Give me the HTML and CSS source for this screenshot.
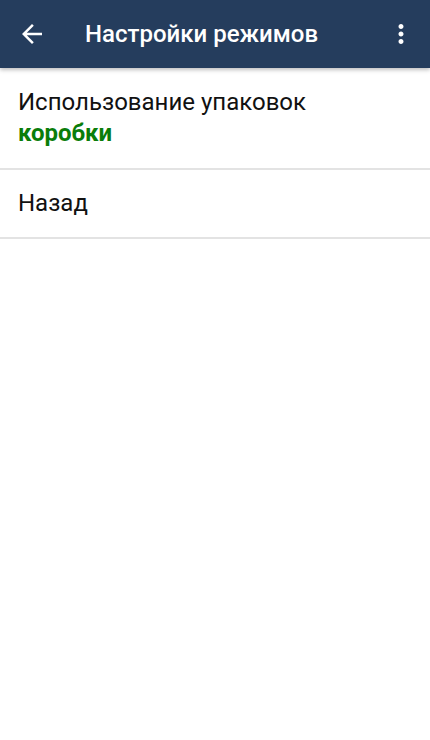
FILE: index.html
```html
<!DOCTYPE html>
<html lang="ru">
<head>
    <meta charset="UTF-8">
    <title>Настройки режимов</title>
    <link rel="stylesheet" href="styles.css">
</head>
<body>
    <div class="toolbar">
        <div class="toolbar-btn">
            <svg width="30" height="30" viewBox="0 0 24 24"><path fill="#fff" d="M20 11H7.83l5.59-5.59L12 4l-8 8 8 8 1.41-1.41L7.83 13H20v-2z"/></svg>
        </div>
        <div class="toolbar-title">Настройки режимов</div>
        <div class="toolbar-btn menu-btn">
            <svg width="30" height="30" viewBox="0 0 24 24"><path fill="#fff" d="M12 8c1.1 0 2-.9 2-2s-.9-2-2-2-2 .9-2 2 .9 2 2 2zm0 2c-1.1 0-2 .9-2 2s.9 2 2 2 2-.9 2-2-.9-2-2-2zm0 6c-1.1 0-2 .9-2 2s.9 2 2 2 2-.9 2-2-.9-2-2-2z"/></svg>
        </div>
    </div>
    <div class="list">
        <div class="list-item item-tall">
            <div class="item-title">Использование упаковок</div>
            <div class="item-value">коробки</div>
        </div>
        <div class="list-item">
            <div class="item-title">Назад</div>
        </div>
    </div>
</body>
</html>
```

FILE: styles.css
```css
body {
    margin: 0;
    font-family: Roboto, "Noto Sans", sans-serif;
    background-color: #fff;
}
.toolbar {
    height: 68px;
    background-color: #253d5d;
    display: flex;
    align-items: center;
    box-shadow: 0 2px 4px rgba(0, 0, 0, 0.25);
    position: relative;
}
.toolbar-btn {
    width: 30px;
    height: 30px;
    margin-left: 17px;
    display: flex;
}
.menu-btn {
    margin-left: 0;
    margin-right: 14px;
}
.toolbar-title {
    flex: 1;
    color: #fff;
    font-size: 24px;
    font-weight: 500;
    margin-left: 38px;
}
.list-item {
    height: 69px;
    padding: 18px 18px 0 18px;
    border-bottom: 2px solid #e3e3e3;
    box-sizing: border-box;
}
.item-tall {
    height: 102px;
    padding-top: 19px;
}
.item-title {
    font-size: 24px;
    color: #111;
    line-height: 31px;
}
.item-value {
    font-size: 24px;
    font-weight: bold;
    color: #0a7d0a;
    line-height: 31px;
}
```
